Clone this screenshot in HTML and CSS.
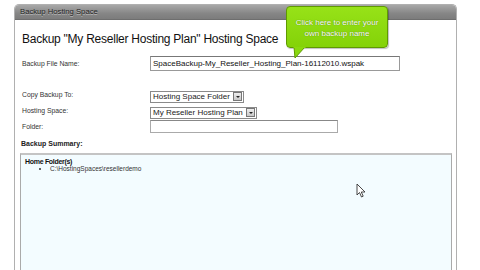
FILE: index.html
```html
<!DOCTYPE html>
<html lang="en">
<head>
    <meta charset="UTF-8">
    <title>Backup Hosting Space</title>
    <link rel="stylesheet" href="styles.css">
</head>
<body>
    <div class="panel">
        <div class="panel-head">Backup Hosting Space</div>
        <h1 class="title">Backup "My Reseller Hosting Plan" Hosting Space</h1>

        <div class="form form-file">
            <label>Backup File Name:</label>
            <div><span class="textbox wide">SpaceBackup-My_Reseller_Hosting_Plan-16112010.wspak</span></div>
        </div>

        <div class="form form-target">
            <label>Copy Backup To:</label>
            <div><span class="select">Hosting Space Folder<span class="drop"></span></span></div>

            <label>Hosting Space:</label>
            <div><span class="select">My Reseller Hosting Plan<span class="drop"></span></span></div>

            <label>Folder:</label>
            <div><span class="textbox folder"></span></div>
        </div>

        <div class="summary-title">Backup Summary:</div>
        <div class="summary">
            <div class="summary-head">Home Folder(s)</div>
            <ul>
                <li>C:\HostingSpaces\resellerdemo</li>
            </ul>
        </div>
    </div>

    <!-- tooltip over the file name box -->
    <div class="tip">
        Click here to enter your<br>own backup name
        <svg class="tip-tail" width="16" height="12" viewBox="0 0 16 12">
            <path d="M1 0 L2 11 L12 0" fill="#8ad80f" stroke="#5f9a00" stroke-width="1"/>
            <path d="M0.5 0 L12.5 0" stroke="#8ad80f" stroke-width="2"/>
        </svg>
    </div>

    <svg class="cursor" width="11" height="15" viewBox="0 0 11 15">
        <path d="M1 1 L1 12 L3.5 9.5 L5.5 14 L7.2 13.2 L5.3 9 L9 9 Z" fill="#fff" stroke="#333" stroke-width="0.9"/>
    </svg>
</body>
</html>
```

FILE: styles.css
```css
body {
    margin: 0;
    background-color: #fff;
    font-family: "Liberation Sans", Arial, sans-serif;
    color: #222;
}

.panel {
    margin: 4px 0 0 14px;
    width: 443px;
    height: 266px;
    border: 1px solid #b0b0b0;
    border-bottom: none;
    border-radius: 5px 5px 0 0;
    overflow: hidden;
    box-sizing: border-box;
}

.panel-head {
    height: 14px;
    line-height: 14px;
    padding-left: 5px;
    font-size: 7.7px;
    color: #262626;
    text-shadow: 0 1px 0 #bbb;
    background: linear-gradient(#a8a8a8, #868686 60%, #7c7c7c);
    border-bottom: 1px solid #6e6e6e;
}

.title {
    margin: 12px 0 0 7px;
    font-size: 12px;
    line-height: 14px;
    font-weight: normal;
    letter-spacing: -0.25px;
    color: #111;
}

.form {
    display: grid;
    grid-template-columns: 128px auto;
    align-items: center;
    padding-left: 7px;
}

.form label {
    font-size: 6.8px;
    color: #333;
}

.form-file {
    margin-top: 10px;
    grid-template-rows: 15px;
}

.form-target {
    margin-top: 17px;
    grid-template-rows: 12px 12px 13px;
    row-gap: 4px;
}

.textbox {
    display: block;
    box-sizing: border-box;
    background: #fff;
    border: 1px solid #999;
    border-top-color: #777;
}

.textbox.wide {
    width: 250px;
    height: 15px;
    line-height: 13px;
    padding-left: 2px;
    font-size: 8px;
    color: #111;
}

.textbox.folder {
    width: 188px;
    height: 13px;
    border-color: #aaa;
    border-top-color: #888;
}

.select {
    display: inline-flex;
    align-items: center;
    box-sizing: border-box;
    height: 12px;
    padding-left: 2px;
    border: 1px solid #8a8a8a;
    font-size: 8px;
    color: #222;
    background: #fff;
}

.drop {
    position: relative;
    width: 9px;
    height: 9px;
    margin: 0 1px 0 3px;
    box-sizing: border-box;
    border: 1px solid #777;
    background: linear-gradient(#eee, #c8c8c8);
}

.drop::after {
    content: "";
    position: absolute;
    left: 2px;
    top: 3px;
    border-left: 2px solid transparent;
    border-right: 2px solid transparent;
    border-top: 2px solid #222;
}

.summary-title {
    margin: 6px 0 0 6px;
    font-size: 7px;
    line-height: 9px;
    font-weight: bold;
    color: #222;
}

.summary {
    margin: 5px 0 0 5px;
    width: 432px;
    height: 140px;
    box-sizing: border-box;
    border: 1px solid #aaa;
    border-top: 2px solid #c4c4c4;
    background-color: #f3fcff;
    padding: 3px 4px;
}

.summary-head {
    font-size: 7px;
    font-weight: bold;
    letter-spacing: -0.3px;
    color: #111;
}

.summary ul {
    margin: 0;
    padding-left: 25px;
    font-size: 6.5px;
    color: #333;
}

.tip {
    position: absolute;
    left: 286px;
    top: 6px;
    width: 102px;
    height: 42px;
    box-sizing: border-box;
    padding-top: 10px;
    border: 1px solid #5f9a00;
    border-radius: 4px;
    background: linear-gradient(#97e218, #84d208);
    box-shadow: 1px 1px 1px rgba(0, 0, 0, 0.25);
    font-size: 8px;
    line-height: 11px;
    text-align: center;
    color: #fff;
    text-shadow: 0 0 1px #3f6c00;
}

.tip-tail {
    position: absolute;
    left: 6px;
    top: 40px;
}

.cursor {
    position: absolute;
    left: 356px;
    top: 183px;
}
```
